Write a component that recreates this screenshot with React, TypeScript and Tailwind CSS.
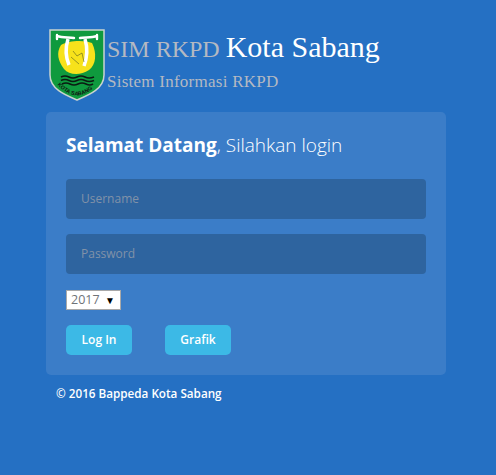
import React from 'react';

function Logo() {
  return (
    <svg width="56" height="72" viewBox="0 0 56 72" className="shrink-0">
      <path d="M1 1 H55 V46 C55 60 40 66 28 71 C16 66 1 60 1 46 Z" fill="#0f9a3e" stroke="#c9d3cf" strokeWidth="1.5" />
      <path d="M12 16 C20 11 36 11 43 14 C48 24 47 36 40 41 C31 47 20 46 15 40 C9 32 7 24 12 16 Z" fill="#f7e21b" />
      <path d="M19 10 C16 20 17 29 20 36 M36 10 C39 20 38 29 35 37" fill="none" stroke="#ffffff" strokeWidth="3.5" />
      <path d="M8 7 C14 9 20 8 25 9 M48 7 C42 9 36 8 31 9 M8 6 L8 10 M48 6 L48 10" fill="none" stroke="#ffffff" strokeWidth="2.4" strokeLinecap="round" />
      <path d="M24 22 L28 27 L33 24 L35 33 M22 28 L30 35" fill="none" stroke="#59621e" strokeWidth="0.6" />
      <path d="M12 48 Q16 46 20 48 T28 48 T36 48 T45 48 M12 51.5 Q16 49.5 20 51.5 T28 51.5 T36 51.5 T45 51.5 M13 55 Q17 53 21 55 T29 55 T37 55 T44 55" fill="none" stroke="#0b1b12" strokeWidth="1.6" />
      <path id="logo-arc" d="M7 54 C14 63 22 66 28 66.5 C34 66 42 63 49 54" fill="none" />
      <text fontSize="5.5" fontWeight="700" fill="#111" fontFamily="'Liberation Sans', sans-serif">
        <textPath href="#logo-arc" startOffset="4%">KOTA SABANG</textPath>
      </text>
    </svg>
  );
}

export default function App() {
  return (
    <div className="min-h-[475px] w-full bg-[#2570c3] pt-[29px] pl-[46px] font-['Open_Sans',sans-serif]">
      <div className="flex ml-[3px]">
        <Logo />
        <div className="ml-[2px] font-['Liberation_Serif',serif]">
          <div className="h-[36px] text-[24px] leading-[36px] text-[#b4b9c2] whitespace-nowrap">
            SIM RKPD <span className="text-[30px] text-white">Kota Sabang</span>
          </div>
          <div className="mt-[6px] text-[17px] leading-[22px] tracking-[0.25px] text-[#b4b9c2]">Sistem Informasi RKPD</div>
        </div>
      </div>

      <div className="mt-[11px] h-[263px] w-[400px] rounded-[5px] bg-[#3b7dc8] px-5 pt-[18px]">
        <h1 className="text-[19px] leading-[30px] font-light text-white">
          <span className="font-bold">Selamat Datang</span>, Silahkan login
        </h1>
        <form className="mt-[19px]">
          <input
            placeholder="Username"
            className="block h-10 w-[360px] rounded-[4px] bg-[#2e649f] px-[15px] pb-[2px] text-[12px] text-white outline-none placeholder:text-[#8192a8]"
          />
          <input
            placeholder="Password"
            className="mt-[15px] block h-10 w-[360px] rounded-[4px] bg-[#2e649f] px-[15px] pb-[2px] text-[12px] text-white outline-none placeholder:text-[#8192a8]"
          />
          <div className="mt-4 flex h-5 w-[55px] items-center justify-between border border-[#a9a9a9] bg-white pl-1 pr-[5px] text-[12.5px] text-[#6f7378]">
            <span>2017</span>
            <span className="text-[10px] text-black">▼</span>
          </div>
          <div className="mt-[15px] flex gap-[33px]">
            <button type="button" className="h-[30px] w-[66px] rounded-[5px] bg-[#3cb9e6] text-[12px] font-semibold text-white">Log In</button>
            <button type="button" className="h-[30px] w-[66px] rounded-[5px] bg-[#3cb9e6] text-[12px] font-semibold text-white">Grafik</button>
          </div>
        </form>
      </div>

      <p className="mt-[9px] ml-[10px] text-[11.7px] leading-[18px] font-semibold text-white">© 2016 Bappeda Kota Sabang</p>
    </div>
  );
}
